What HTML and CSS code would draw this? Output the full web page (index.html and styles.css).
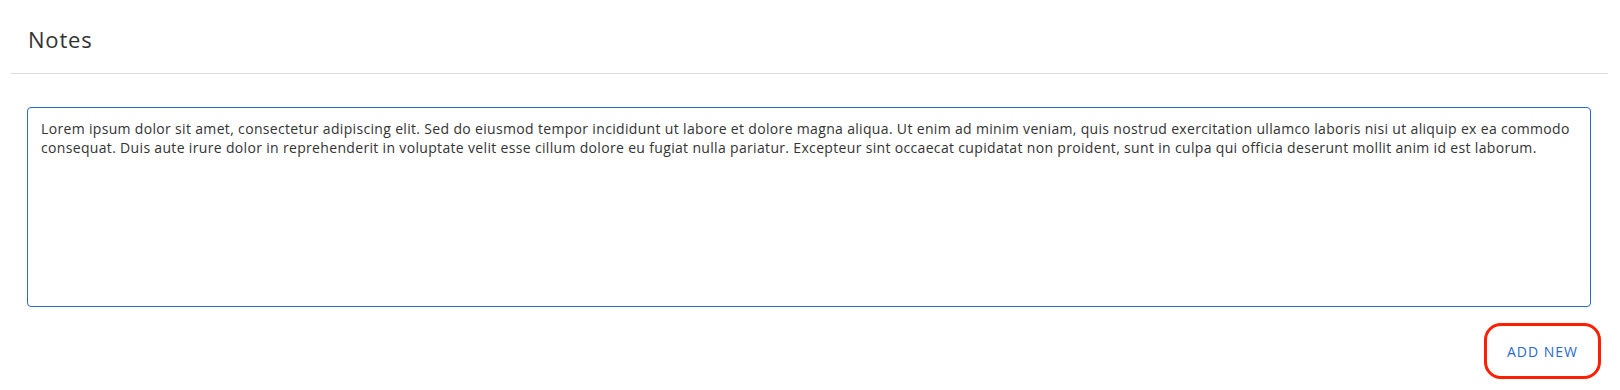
FILE: index.html
```html
<!DOCTYPE html>
<html lang="en">

<head>
    <meta charset="UTF-8">
    <meta name="viewport" content="width=device-width, initial-scale=1.0">
    <title>Notes</title>
    <link rel="stylesheet" href="styles.css">
</head>

<body>
    <div class="page">
        <div class="header">
            <h1>Notes</h1>
        </div>

        <div class="content">
            <textarea class="note" autofocus>Lorem ipsum dolor sit amet, consectetur adipiscing elit. Sed do eiusmod tempor incididunt ut labore et dolore magna aliqua. Ut enim ad minim veniam, quis nostrud exercitation ullamco laboris nisi ut aliquip ex ea commodo consequat. Duis aute irure dolor in reprehenderit in voluptate velit esse cillum dolore eu fugiat nulla pariatur. Excepteur sint occaecat cupidatat non proident, sunt in culpa qui officia deserunt mollit anim id est laborum.</textarea>

            <div class="actions">
                <button class="add">Add New</button>
            </div>
        </div>
    </div>
</body>

</html>
```

FILE: styles.css
```css
html,
body {
    margin: 0;
    padding: 0;
}

:root {
    --text-color: #333333;
    --blue: #2a6ac8;
}

body {
    font-family: "Open Sans", Lato, sans-serif;
    color: var(--text-color);
    background: #ffffff;
}

.header {
    margin: 0 12px 0 11px;
    padding: 23px 17px 18px;
    border-bottom: 1px solid #dddddd;
}

.header h1 {
    margin: 0;
    font-size: 22px;
    font-weight: 400;
    line-height: 32px;
    letter-spacing: 0.8px;
}

.content {
    padding: 33px 29px 0 27px;
}

.note {
    display: block;
    width: 100%;
    height: 200px;
    box-sizing: border-box;
    padding: 11px 13px;
    border: 1px solid var(--blue);
    border-radius: 4px;
    font-family: inherit;
    font-size: 14px;
    line-height: 19px;
    letter-spacing: 0.33px;
    color: var(--text-color);
    resize: none;
    outline: none;
}

.actions {
    display: flex;
    justify-content: flex-end;
    margin-top: 16px;
    margin-right: -10px;
}

.add {
    width: 117px;
    height: 56px;
    background: #ffffff;
    border: 3px solid #ff1e00;
    border-radius: 17px;
    color: var(--blue);
    font-family: inherit;
    font-size: 14px;
    font-weight: 400;
    letter-spacing: 1px;
    text-transform: uppercase;
    cursor: pointer;
}
```
